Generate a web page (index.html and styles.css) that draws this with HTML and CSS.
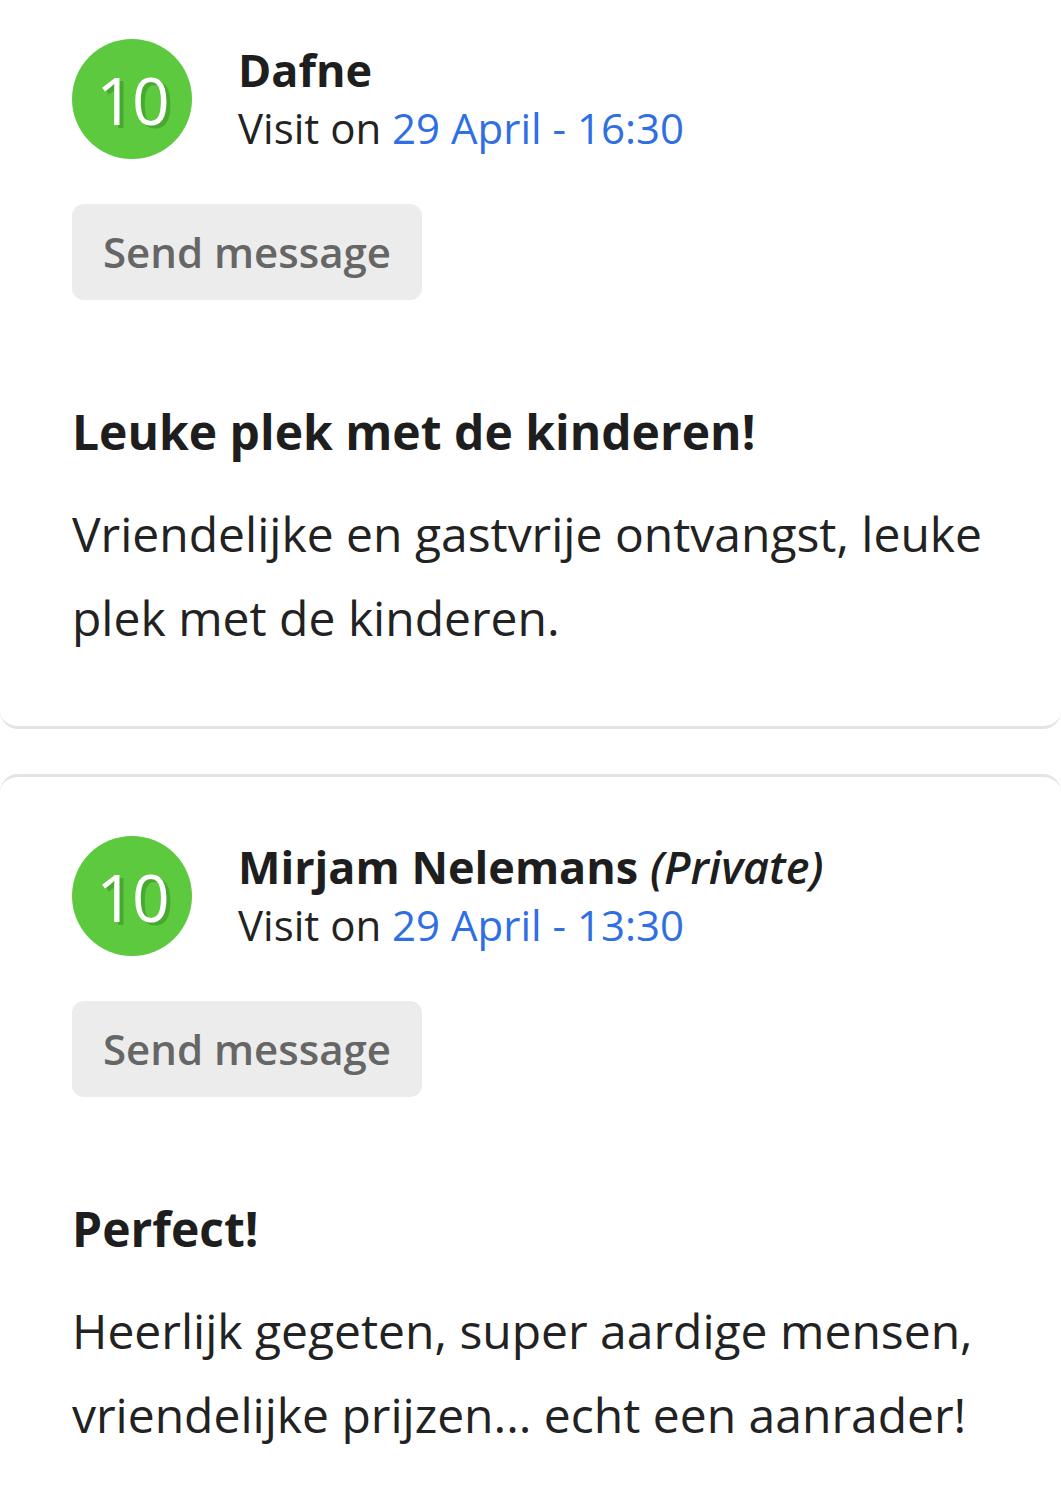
FILE: index.html
```html
<html lang="en">
  <head>
    <meta charset="UTF-8" />
    <meta name="viewport" content="width=device-width, initial-scale=1.0" />
    <title>Reviews</title>
    <link rel="stylesheet" href="styles.css">
  </head>
  <body>
    <div class="review-list">
      <div class="review-card">
        <div class="review-head">
          <div class="score">10</div>
          <div class="guest">
            <div class="guest-name">Dafne</div>
            <div class="visit">Visit on <span class="visit-date">29 April - 16:30</span></div>
          </div>
        </div>
        <button class="btn-message">Send message</button>
        <h2 class="review-title">Leuke plek met de kinderen!</h2>
        <p class="review-text">Vriendelijke en gastvrije ontvangst, leuke plek met de kinderen.</p>
      </div>

      <div class="review-card">
        <div class="review-head">
          <div class="score">10</div>
          <div class="guest">
            <div class="guest-name">Mirjam Nelemans <span class="private">(Private)</span></div>
            <div class="visit">Visit on <span class="visit-date">29 April - 13:30</span></div>
          </div>
        </div>
        <button class="btn-message">Send message</button>
        <h2 class="review-title">Perfect!</h2>
        <p class="review-text">Heerlijk gegeten, super aardige mensen, vriendelijke prijzen... echt een aanrader!</p>
      </div>
    </div>
  </body>
</html>
```

FILE: styles.css
```css
body {
  margin: 0;
  background-color: #ffffff;
  font-family: "Open Sans", "Noto Sans", sans-serif;
  color: #222222;
  overflow: hidden;
}

.review-list {
  display: flex;
  flex-direction: column;
  gap: 45px;
  margin-top: -20px;
}

.review-card {
  padding: 59px 72px 66px;
  border-top: 3px solid #e4e4e4;
  border-bottom: 3px solid #e4e4e4;
  border-radius: 18px;
}

.review-card:first-child {
  border-top: none;
}

.review-card:last-child {
  border-bottom: none;
}

.review-head {
  display: flex;
  align-items: center;
  gap: 46px;
}

.score {
  flex: none;
  width: 120px;
  height: 120px;
  border-radius: 50%;
  background-color: #5dc93f;
  color: #ffffff;
  font-size: 66px;
  line-height: 120px;
  text-align: center;
  letter-spacing: -2px;
  text-shadow: 4px 3px 0 #47a92f;
}

.guest {
  font-size: 42px;
  line-height: 58px;
}

.guest-name {
  font-size: 45px;
  font-weight: 700;
  color: #1e1e1e;
}

.private {
  font-style: italic;
  font-weight: 600;
}

.visit {
  color: #222222;
}

.visit-date {
  color: #2f6fe3;
}

.btn-message {
  display: block;
  margin-top: 45px;
  padding: 20px 31px;
  border: none;
  border-radius: 12px;
  background-color: #ececec;
  color: #666666;
  font-family: inherit;
  font-size: 42px;
  font-weight: 600;
  line-height: 56px;
}

.review-title {
  margin: 98px 0 0;
  font-size: 48px;
  font-weight: 700;
  line-height: 67px;
  color: #1e1e1e;
}

.review-text {
  margin: 27px 0 0;
  font-size: 48px;
  line-height: 84px;
  color: #222222;
}
```
